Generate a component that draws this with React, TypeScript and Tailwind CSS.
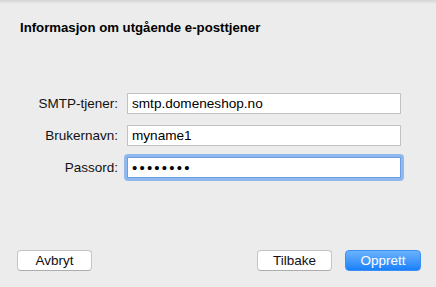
// Kontoassistent — steg for utgående e-posttjener (macOS Mail-ark)

const font = { fontFamily: '"Liberation Sans", Arial, sans-serif' };

function Field({ label, value, focused, secret }: { label: string; value: string; focused?: boolean; secret?: boolean }) {
  return (
    <div className="flex items-center h-[21px]">
      <label className="w-[118px] text-right text-[13.5px] leading-[16px] text-[#111]">{label}</label>
      <div className="ml-[9px] relative w-[274px] h-[21px]">
        {focused && (
          <div className="absolute -inset-[3px] rounded-[4px] border-[3px] border-[#8fb8ef]" />
        )}
        <div
          className={`relative h-full bg-white border flex items-center pl-[4px] ${
            focused ? "border-[#6d9de0]" : "border-[#c2c2c2]"
          }`}
        >
          {secret ? (
            <span className="text-[15px] leading-[16px] tracking-[2.2px] text-black">{value}</span>
          ) : (
            <span className="text-[13.6px] leading-[16px] text-black">{value}</span>
          )}
        </div>
      </div>
    </div>
  );
}

function Button({ children, primary }: { children: string; primary?: boolean }) {
  return (
    <button
      className={
        primary
          ? "w-[76px] h-[21px] rounded-[4px] bg-gradient-to-b from-[#6ab2fb] to-[#1580fb] border border-[#3d8ff5] text-white text-[13.5px] leading-[16px]"
          : "w-[75px] h-[21px] rounded-[4px] bg-white border border-[#c4c4c4] border-b-[#adadad] text-[#111] text-[13.5px] leading-[16px]"
      }
    >
      {children}
    </button>
  );
}

export default function App() {
  return (
    <div className="w-[436px] h-[287px] bg-[#ececec] flex flex-col" style={font}>
      {/* skygge fra vindustittelen */}
      <div className="h-[4px] bg-gradient-to-b from-[#d6d6d6] to-[#ececec]" />

      <h1 className="pl-[20px] pt-[16px] text-[13.2px] leading-[16px] font-bold text-black">
        Informasjon om utgående e-posttjener
      </h1>

      <div className="mt-[57px] flex flex-col gap-[11px]">
        <Field label="SMTP-tjener:" value="smtp.domeneshop.no" />
        <Field label="Brukernavn:" value="myname1" />
        <Field label="Passord:" value="••••••••" focused secret />
      </div>

      <div className="mt-auto pb-[16px] flex items-center pl-[17px] pr-[15px]">
        <Button>Avbryt</Button>
        <div className="flex-1" />
        <div className="flex gap-[13px]">
          <Button>Tilbake</Button>
          <Button primary>Opprett</Button>
        </div>
      </div>
    </div>
  );
}
